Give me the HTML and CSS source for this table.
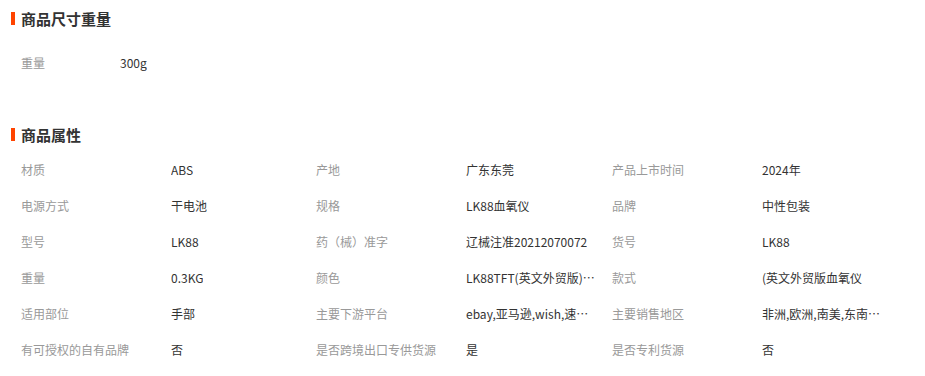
FILE: index.html
```html
<!DOCTYPE html>
<html lang="zh-CN">
<head>
<meta charset="utf-8">
<title>商品属性</title>
<link rel="stylesheet" href="styles.css">
</head>
<body>
<div class="page">
  <section class="block">
    <h2 class="section-title">商品尺寸重量</h2>
    <div class="size-list">
      <div class="size-row"><span class="label size-label">重量</span><span class="value">300g</span></div>
    </div>
  </section>
  <section class="block block-attrs">
    <h2 class="section-title">商品属性</h2>
    <div class="attr-grid">
      <div class="cell"><span class="label">材质</span><span class="value">ABS</span></div>
      <div class="cell"><span class="label">产地</span><span class="value">广东东莞</span></div>
      <div class="cell"><span class="label">产品上市时间</span><span class="value">2024年</span></div>

      <div class="cell"><span class="label">电源方式</span><span class="value">干电池</span></div>
      <div class="cell"><span class="label">规格</span><span class="value">LK88血氧仪</span></div>
      <div class="cell"><span class="label">品牌</span><span class="value">中性包装</span></div>

      <div class="cell"><span class="label">型号</span><span class="value">LK88</span></div>
      <div class="cell"><span class="label">药（械）准字</span><span class="value">辽械注准20212070072</span></div>
      <div class="cell"><span class="label">货号</span><span class="value">LK88</span></div>

      <div class="cell"><span class="label">重量</span><span class="value">0.3KG</span></div>
      <div class="cell"><span class="label">颜色</span><span class="value">LK88TFT(英文外贸版)血氧仪</span></div>
      <div class="cell"><span class="label">款式</span><span class="value">(英文外贸版血氧仪</span></div>

      <div class="cell"><span class="label">适用部位</span><span class="value">手部</span></div>
      <div class="cell"><span class="label">主要下游平台</span><span class="value">ebay,亚马逊,wish,速卖通,独立站</span></div>
      <div class="cell"><span class="label">主要销售地区</span><span class="value">非洲,欧洲,南美,东南亚,北美</span></div>

      <div class="cell"><span class="label">有可授权的自有品牌</span><span class="value">否</span></div>
      <div class="cell"><span class="label">是否跨境出口专供货源</span><span class="value">是</span></div>
      <div class="cell"><span class="label">是否专利货源</span><span class="value">否</span></div>
    </div>
  </section>
</div>
</body>
</html>
```

FILE: styles.css
```css
html, body {
  margin: 0;
  padding: 0;
  background: #ffffff;
}

body {
  font-family: "Noto Sans CJK SC", "Microsoft YaHei", "Liberation Sans", sans-serif;
  font-size: 12px;
  color: #333333;
}

.page {
  padding-top: 3px;
}

.section-title {
  display: flex;
  align-items: center;
  height: 30px;
  margin: 0;
  padding-left: 11px;
  font-size: 15px;
  font-weight: bold;
  color: #333333;
}

.section-title::before {
  content: "";
  display: block;
  width: 4px;
  height: 13px;
  margin-right: 6px;
  background: #ff4400;
}

.size-list {
  margin-top: 11px;
  padding-left: 21px;
}

.size-row {
  display: flex;
  align-items: center;
  height: 36px;
}

.block-attrs {
  margin-top: 39px;
}

.attr-grid {
  margin-top: 2px;
  padding-left: 21px;
  display: grid;
  grid-template-columns: 295px 296px 296px;
  grid-auto-rows: 36px;
}

.cell {
  display: flex;
  align-items: center;
  min-width: 0;
}

.label {
  flex: 0 0 150px;
  color: #999999;
  white-space: nowrap;
}

.size-label {
  flex-basis: 99px;
}

.value {
  max-width: 130px;
  color: #333333;
  white-space: nowrap;
  overflow: hidden;
  text-overflow: ellipsis;
}
```
